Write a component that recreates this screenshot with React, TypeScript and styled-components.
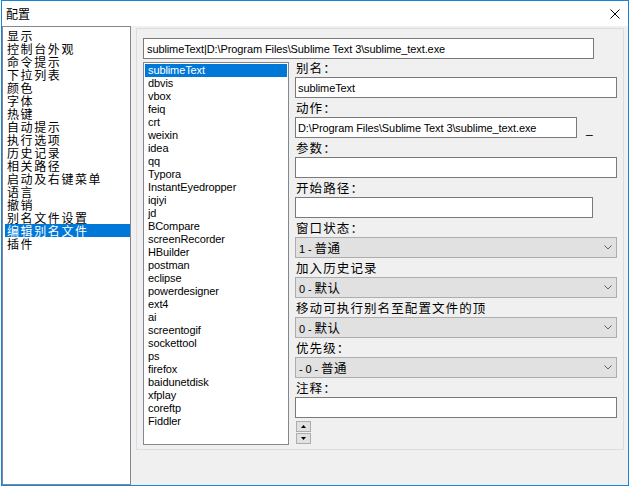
import React from "react";
import styled, { createGlobalStyle } from "styled-components";

const cjk = `"Noto Sans CJK SC", "Liberation Sans", sans-serif`;
const latin = `"Liberation Sans", "Noto Sans CJK SC", sans-serif`;

const GlobalStyle = createGlobalStyle`
  html, body { margin: 0; padding: 0; background: #ffffff; }
  body { font-family: ${latin}; color: #000; }
  * { box-sizing: border-box; }
`;

const Window = styled.div`
  margin-left: 1px;
  width: 628px;
  height: 486px;
  border: 1px solid #1883d7;
  background: #f0f0f0;
  display: flex;
  flex-direction: column;
`;

const TitleBar = styled.div`
  height: 25px;
  flex: none;
  background: #ffffff;
  display: flex;
  align-items: center;
  justify-content: space-between;
  padding: 0 8px 0 4px;
`;

const Title = styled.span`
  font-family: ${cjk};
  font-size: 12px;
  line-height: 14px;
`;

const CloseButton = styled.span`
  display: flex;
  width: 10px;
  height: 10px;
`;

const Body = styled.div`
  flex: 1;
  min-height: 0;
  display: flex;
`;

const NavList = styled.ul`
  width: 129px;
  flex: none;
  margin: 0;
  list-style: none;
  background: #ffffff;
  border: 1px solid #828790;
  padding: 2px 0 0 2px;
`;

const NavItem = styled.li<{ $selected?: boolean }>`
  height: 13px;
  line-height: 13px;
  padding-left: 2px;
  font-family: ${cjk};
  font-size: 12px;
  letter-spacing: 1.6px;
  white-space: nowrap;
  background: ${(p) => (p.$selected ? "#0078d7" : "transparent")};
  color: ${(p) => (p.$selected ? "#ffffff" : "#000000")};
`;

const Main = styled.div`
  flex: 1;
  padding: 2px 4px 0 5px;
`;

const Group = styled.div`
  border: 1px solid #dcdcdc;
  padding: 9px 0 4px 6px;
  display: flex;
  flex-direction: column;
`;

const TextBox = styled.input<{ $w: number }>`
  width: ${(p) => p.$w}px;
  height: 21px;
  border: 1px solid #7a7a7a;
  background: #ffffff;
  padding: 0 0 0 2px;
  margin: 0;
  font-family: ${latin};
  font-size: 11px;
  letter-spacing: -0.1px;
  color: #000;
  outline: none;
  border-radius: 0;
`;

const TopBox = styled(TextBox)`
  padding-left: 3px;
`;

const Row = styled.div`
  display: flex;
  gap: 6px;
`;

const List = styled.ul`
  width: 146px;
  height: 383px;
  flex: none;
  margin: 3px 0 0 0;
  list-style: none;
  border: 1px solid #828790;
  background: #ffffff;
  padding: 1px;
`;

const ListItem = styled.li<{ $selected?: boolean }>`
  height: 13px;
  line-height: 13px;
  padding-left: 3px;
  font-family: ${latin};
  font-size: 11px;
  letter-spacing: -0.1px;
  white-space: nowrap;
  background: ${(p) => (p.$selected ? "#0078d7" : "transparent")};
  color: ${(p) => (p.$selected ? "#ffffff" : "#000000")};
`;

const Form = styled.div`
  margin-top: -1px;
  width: 328px;
  display: flex;
  flex-direction: column;
`;

const Label = styled.div`
  height: 19px;
  display: flex;
  align-items: center;
  padding-left: 1px;
  font-family: ${cjk};
  font-size: 12.5px;
  letter-spacing: 1.1px;
  white-space: nowrap;
`;

const FieldRow = styled.div`
  display: flex;
  align-items: flex-start;
`;

const Ellipsis = styled.span`
  margin-left: 9px;
  padding-top: 5px;
  height: 21px;
  font-family: ${latin};
  font-size: 12px;
  line-height: 14px;
`;

const Select = styled.div`
  width: 322px;
  height: 21px;
  border: 1px solid #adadad;
  background: #e1e1e1;
  display: flex;
  align-items: center;
  justify-content: space-between;
  padding: 0 4px 0 3px;
  font-family: ${latin};
  font-size: 11px;
  letter-spacing: -0.1px;
`;

const Cjk = styled.span`
  font-family: ${cjk};
  font-size: 12.5px;
  letter-spacing: 0.5px;
`;

const Spinner = styled.div`
  margin: 3px 0 0 1px;
  display: flex;
  flex-direction: column;
  gap: 1px;
`;

const SpinButton = styled.div`
  width: 15px;
  height: 11px;
  border: 1px solid #adadad;
  background: #e1e1e1;
  display: flex;
  align-items: center;
  justify-content: center;
`;

const Chevron = () => (
  <svg width="8" height="5" viewBox="0 0 8 5">
    <polyline points="0.5,0.5 4,4 7.5,0.5" fill="none" stroke="#606060" strokeWidth="1" />
  </svg>
);

const Triangle = ({ up }: { up?: boolean }) => (
  <svg width="5" height="3" viewBox="0 0 5 3">
    <polygon points={up ? "0,3 5,3 2.5,0" : "0,0 5,0 2.5,3"} fill="#000" />
  </svg>
);

const navItems = [
  "显示",
  "控制台外观",
  "命令提示",
  "下拉列表",
  "颜色",
  "字体",
  "热键",
  "自动提示",
  "执行选项",
  "历史记录",
  "相关路径",
  "启动及右键菜单",
  "语言",
  "撤销",
  "别名文件设置",
  "编辑别名文件",
  "插件",
];

const aliases = [
  "sublimeText",
  "dbvis",
  "vbox",
  "feiq",
  "crt",
  "weixin",
  "idea",
  "qq",
  "Typora",
  "InstantEyedropper",
  "iqiyi",
  "jd",
  "BCompare",
  "screenRecorder",
  "HBuilder",
  "postman",
  "eclipse",
  "powerdesigner",
  "ext4",
  "ai",
  "screentogif",
  "sockettool",
  "ps",
  "firefox",
  "baidunetdisk",
  "xfplay",
  "coreftp",
  "Fiddler",
];

const path = "D:\\Program Files\\Sublime Text 3\\sublime_text.exe";

export default function App() {
  return (
    <>
      <GlobalStyle />
      <Window>
        <TitleBar>
          <Title>配置</Title>
          <CloseButton>
            <svg width="10" height="10" viewBox="0 0 10 10">
              <path d="M0.5 0.5 L9.5 9.5 M9.5 0.5 L0.5 9.5" stroke="#000" strokeWidth="1" />
            </svg>
          </CloseButton>
        </TitleBar>
        <Body>
          <NavList>
            {navItems.map((n) => (
              <NavItem key={n} $selected={n === "编辑别名文件"}>
                {n}
              </NavItem>
            ))}
          </NavList>
          <Main>
            <Group>
              <TopBox $w={451} readOnly value={`sublimeText|${path}`} />
              <Row>
                <List>
                  {aliases.map((a, i) => (
                    <ListItem key={a} $selected={i === 0}>
                      {a}
                    </ListItem>
                  ))}
                </List>
                <Form>
                  <Label>别名：</Label>
                  <TextBox $w={322} readOnly value="sublimeText" />
                  <Label>动作：</Label>
                  <FieldRow>
                    <TextBox $w={282} readOnly value={path} />
                    <Ellipsis>_</Ellipsis>
                  </FieldRow>
                  <Label>参数：</Label>
                  <TextBox $w={322} readOnly value="" />
                  <Label>开始路径：</Label>
                  <TextBox $w={298} readOnly value="" />
                  <Label>窗口状态：</Label>
                  <Select>
                    <span>
                      1 - <Cjk>普通</Cjk>
                    </span>
                    <Chevron />
                  </Select>
                  <Label>加入历史记录</Label>
                  <Select>
                    <span>
                      0 - <Cjk>默认</Cjk>
                    </span>
                    <Chevron />
                  </Select>
                  <Label>移动可执行别名至配置文件的顶</Label>
                  <Select>
                    <span>
                      0 - <Cjk>默认</Cjk>
                    </span>
                    <Chevron />
                  </Select>
                  <Label>优先级：</Label>
                  <Select>
                    <span>
                      - 0 - <Cjk>普通</Cjk>
                    </span>
                    <Chevron />
                  </Select>
                  <Label>注释：</Label>
                  <TextBox $w={322} readOnly value="" />
                  <Spinner>
                    <SpinButton>
                      <Triangle up />
                    </SpinButton>
                    <SpinButton>
                      <Triangle />
                    </SpinButton>
                  </Spinner>
                </Form>
              </Row>
            </Group>
          </Main>
        </Body>
      </Window>
    </>
  );
}
